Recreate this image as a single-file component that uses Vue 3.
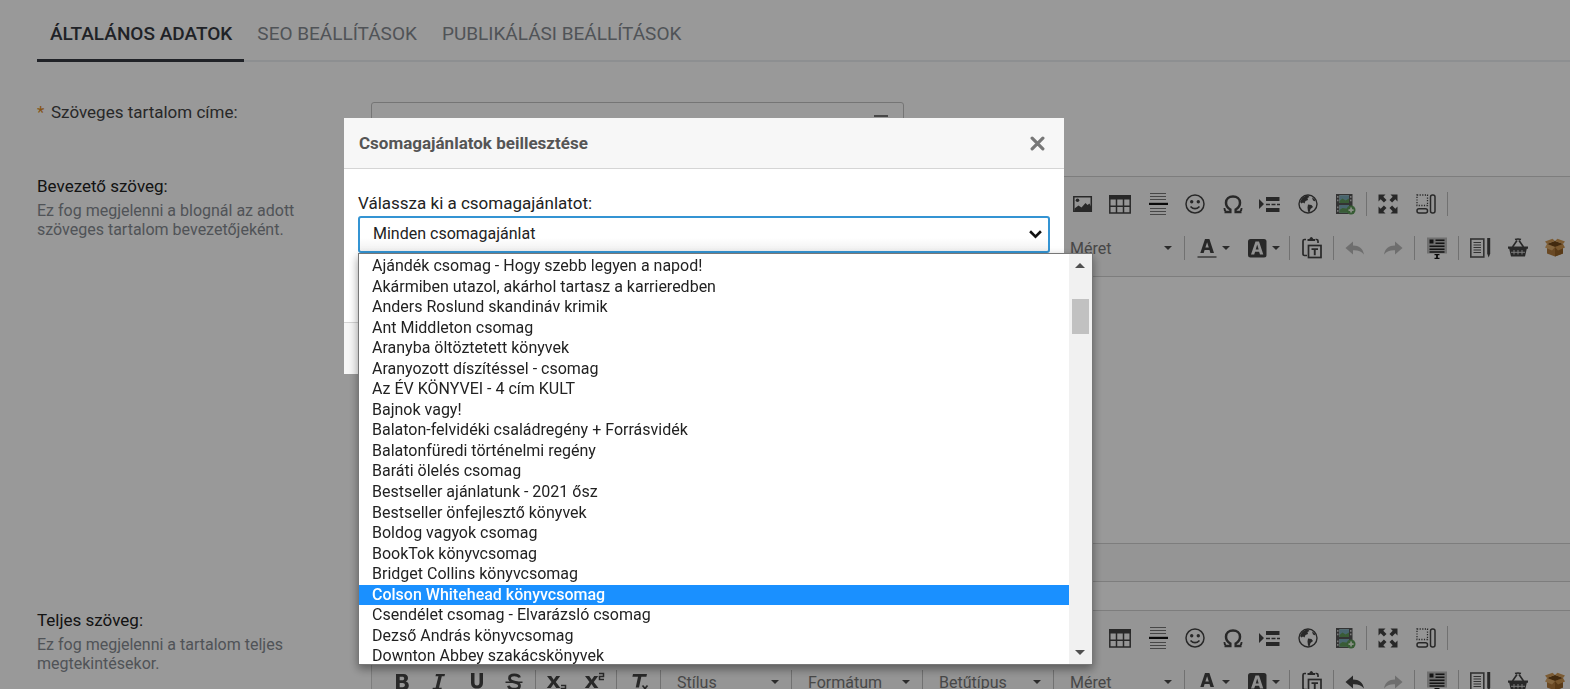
<script setup>
import { ref } from 'vue'

const tabs = ['ÁLTALÁNOS ADATOK', 'SEO BEÁLLÍTÁSOK', 'PUBLIKÁLÁSI BEÁLLÍTÁSOK']
const activeTab = ref(0)

const packages = [
  'Ajándék csomag - Hogy szebb legyen a napod!',
  'Akármiben utazol, akárhol tartasz a karrieredben',
  'Anders Roslund skandináv krimik',
  'Ant Middleton csomag',
  'Aranyba öltöztetett könyvek',
  'Aranyozott díszítéssel - csomag',
  'Az ÉV KÖNYVEI - 4 cím KULT',
  'Bajnok vagy!',
  'Balaton-felvidéki családregény + Forrásvidék',
  'Balatonfüredi történelmi regény',
  'Baráti ölelés csomag',
  'Bestseller ajánlatunk - 2021 ősz',
  'Bestseller önfejlesztő könyvek',
  'Boldog vagyok csomag',
  'BookTok könyvcsomag',
  'Bridget Collins könyvcsomag',
  'Colson Whitehead könyvcsomag',
  'Csendélet csomag - Elvarázsló csomag',
  'Dezső András könyvcsomag',
  'Downton Abbey szakácskönyvek'
]
const highlighted = ref(16)

const editors = [
  { id: 'intro', label: 'Bevezető szöveg:', hint: 'Ez fog megjelenni a blognál az adott szöveges tartalom bevezetőjeként.', canUndo: false },
  { id: 'full', label: 'Teljes szöveg:', hint: 'Ez fog megjelenni a tartalom teljes megtekintésekor.', canUndo: true }
]

const insertTools = ['image', 'table', 'rule', 'smiley', 'omega', 'pagebreak', 'globe', 'film']
const viewTools = ['maximize', 'blocks']
const styleTools = ['bold', 'italic', 'underline', 'strike']
const scriptTools = ['sub', 'sup']
const shopTools = ['article', 'basket', 'box']
const combos = ['Stílus', 'Formátum', 'Betűtípus', 'Méret']

const film = '<path d="M3 2h3.500v20H3zM16 2h3.500v20H16zM3 11h16v2H3zM3 2h16v1.200H3zM3 20.800h16V22H3z" fill="#555"/><path d="M6.500 3.200H16V11H6.500zM6.500 13H16v7.800H6.500z" fill="#79a9b8"/><path d="M6.500 9l3-2.500 3 2 3.500-2V11H6.500zM6.500 18l3-2 6.500 1v3.800H6.500z" fill="#5f9a5a"/><path d="M4 4h1.500v1.800H4zM4 7.500h1.500v1.800H4zM4 14.500h1.500v1.800H4zM4 18h1.500v1.800H4zM17 4h1.500v1.800H17zM17 7.500h1.500v1.800H17z" fill="#ccc"/><circle cx="18" cy="18" r="4.500" fill="#5c9a58"/><path d="M17.200 15.500h1.700v1.700h1.700v1.700h-1.700v1.700h-1.700v-1.700h-1.700v-1.700h1.700z" fill="#e6f2e2"/>'

const icons = {
  image: '<path d="M2.800 4.800h17.500v14.500H2.800z" fill="none" stroke="#444" stroke-width="1.500"/><circle cx="6.500" cy="8.200" r="1.800"/><path d="M3.500 19v-2.500l4-3 3 2 4-4.500 2 2 2-1.500 1.500 3V19z"/>',
  table: '<path d="M1 3h22v4.500H1z"/><path d="M1.800 7v14h20.400V7M2 14.200h20M8.500 7v14M15.500 7v14" fill="none" stroke="#444" stroke-width="1.500"/>',
  rule: '<path d="M4 1.500h16M4 4.500h16M4 7.500h16M4 16.500h16M4 19.500h16M4 22.500h16" stroke="#777" stroke-width="1.100"/><path d="M3 10.800h19v2.200H3z" fill="#111"/>',
  smiley: '<circle cx="12" cy="12" r="9" fill="none" stroke="#444" stroke-width="1.500"/><circle cx="8.700" cy="9.700" r="1.700"/><circle cx="15.300" cy="9.700" r="1.700"/><path d="M7.500 14.500q4.500 4.500 9 0" fill="none" stroke="#444" stroke-width="1.700"/>',
  omega: '<path d="M3.500 20h5.800v-2.500C6.500 16 5 13.500 5 10.800 5 6.800 8 4.500 12 4.500s7 2.300 7 6.300c0 2.700-1.500 5.200-4.300 6.700V20h5.800" fill="none" stroke="#444" stroke-width="2.500"/><path d="M2.500 16h1.700l1 3H3zM21.500 16h-1.700l-1 3H21z"/>',
  pagebreak: '<path d="M1 7l5 5-5 5zM8 5h13.500v4H8zM8 16h13.500v4H8z"/><path d="M8 12.500h14" stroke="#444" stroke-width="1.600" stroke-dasharray="4 1.500"/>',
  globe: '<circle cx="12" cy="12" r="9" fill="none" stroke="#444" stroke-width="1.400"/><path d="M5 8c1.500-3 4-4.500 7-4.500l1.500 1.500-2 1 .5 2-2.500 1-1 2.500-1.500-1-1.500 1L4 10zM12 12.500l3.500.5 1.500 2-2.500 2-1 3.500-1.500-1-.5-4zM16 5.500l2.500 1.500 1 2.500-2.500-1z"/>',
  film,
  maximize: '<path d="M2.500 2.500h7L7.300 4.700l3.200 3.200-2.600 2.600-3.200-3.200-2.200 2.200zM21.500 2.500v7l-2.200-2.200-3.200 3.200-2.600-2.600 3.200-3.200-2.200-2.200zM2.500 21.500v-7l2.200 2.200 3.200-3.200 2.600 2.600-3.200 3.200 2.200 2.200zM21.500 21.500h-7l2.200-2.200-3.200-3.200 2.600-2.600 3.200 3.200 2.200-2.200z"/>',
  blocks: '<path d="M3 3h10.500v10.500H3z" fill="none" stroke="#444" stroke-width="1.300" stroke-dasharray="1.200 1.400"/><rect x="16.500" y="3" width="4.500" height="18" rx="2" fill="none" stroke="#444" stroke-width="1.500"/><rect x="3" y="16.800" width="10.500" height="4.200" rx="2" fill="none" stroke="#444" stroke-width="1.500"/>',
  bold: '<path fill-rule="evenodd" d="M6 4h7.500c3 0 4.500 1.700 4.500 4 0 1.800-1 3-2.300 3.500 1.900.4 3.100 1.900 3.100 4 0 2.900-2 4.500-5.300 4.500H6zM9.700 6.800v3.500h2.500c1.300 0 2-.6 2-1.800 0-1.100-.7-1.700-2-1.700zM9.700 13v4.200h2.900c1.500 0 2.300-.7 2.300-2.100S14.100 13 12.600 13z"/>',
  italic: '<path d="M9 4h9l-.5 2.300h-2.700L12 17.700h2.800l-.5 2.300h-9l.5-2.300h2.800L11.400 6.300H8.500z"/>',
  underline: '<path d="M6 3h3.500v9.500c0 2 .8 3 2.500 3s2.500-1 2.500-3V3H18v9.500c0 4-2.200 6-6 6s-6-2-6-6zM5 20.500h14v2H5z"/>',
  strike: '<path d="M17.500 7.500C17 5.500 15 4.800 12.300 4.800c-3 0-4.800 1.200-4.800 3.400 0 5.800 10 2 10 7.500 0 2.300-2 3.500-5.200 3.500-3.300 0-5.300-1-5.800-3.400" fill="none" stroke="#444" stroke-width="2.800"/><path d="M3.500 11.500h17v1.500h-17z"/>',
  sub: '<path d="M2 6h4.200l2.500 3.800L11.200 6h4l-4.400 6 4.600 6h-4.200l-2.700-3.900L5.800 18h-4l4.700-6z"/><path d="M16 15.500h4.500v3H16.500V21.500H21" fill="none" stroke="#444" stroke-width="1.500"/>',
  sup: '<path d="M2 6h4.200l2.500 3.800L11.200 6h4l-4.400 6 4.600 6h-4.200l-2.700-3.900L5.800 18h-4l4.700-6z"/><path d="M16 3.500h4.500v3H16.500V9.500H21" fill="none" stroke="#444" stroke-width="1.500"/>',
  clear: '<path d="M6 4h14l-.6 2.700h-5.100L12 17.500H8.700L11 6.700H5.400zM3 19.500h10v2H3z"/><path d="M15.500 15.500l5 6m0-6l-5 6" stroke="#444" stroke-width="1.700"/>',
  color: '<path fill-rule="evenodd" d="M10 3h4.400l4.600 14h-3.600l-.9-3H9.600l-.9 3H5.300zM12.100 6.300L10.400 11.500h3.400z"/><path d="M2.500 20h19v2h-19z" fill="#888"/>',
  background: '<rect x="3" y="3" width="18.500" height="18.500" rx="2.500"/><path fill="#f4f4f4" fill-rule="evenodd" d="M10.500 5.500h3.500l4.300 13H15l-.9-2.700h-4l-.9 2.700H6zM12.200 8.500l-1.500 5h3z"/>',
  paste: '<path d="M6 3.500H4.500Q3 3.500 3 5v13q0 1.500 1.500 1.500H7M15.500 3.500h1q1.500 0 1.500 1.500v2" fill="none" stroke="#444" stroke-width="1.700"/><path d="M7.500 5V3h1.800q1-2 2-2t2 2H15v2z"/><rect x="8.500" y="9.500" width="12.500" height="12" fill="none" stroke="#444" stroke-width="1.700"/><path d="M11.500 12.200H18v1.800h-2.300v5.200h-1.900V14h-2.300z"/>',
  undo: '<path d="M10 5.500v4c6 0 10 3 11 9-3-3.500-6-4.500-11-4.300v4.300L2.500 12z"/>',
  redo: '<path d="M14 5.500v4c-6 0-10 3-11 9 3-3.500 6-4.500 11-4.300v4.300l7.500-6.500z"/>',
  template: '<path d="M2 1.500h20v16H2z" fill="#bbb"/><path d="M4.500 3.500h4v4h-4zM10.500 3.500h9V5h-9zM10.500 6.500h9V8h-9zM4.500 9.500h15V11h-15zM4.500 12.500h15V14h-15zM4.500 15.300h15v1.500h-15z" fill="#222"/><path d="M9.500 18h5v1.300h-1.600v2.500h1.600v1.300h-5v-1.300h1.600v-2.500H9.500z" fill="#111"/>',
  article: '<rect x="2.800" y="3" width="13" height="18" fill="none" stroke="#555" stroke-width="1.600"/><path d="M5.500 6.500h7.500M5.500 9h7.500M5.500 11.500h7.500M5.500 14h7.500M5.500 16.500h7.500" stroke="#555" stroke-width="1"/><path d="M19.200 2h3v15.500l-1.500 4-1.500-4z"/>',
  basket: '<path d="M2 10.500h20v2.200h-1.200L19 20.500H5L3.200 12.700H2z"/><path d="M6.500 11L11 4.500M17.500 11L13 4.500M9 3.500q3-1 6 0" fill="none" stroke="#444" stroke-width="1.600"/><path d="M8 14v4.500M12 14v4.500M16 14v4.500M5 16.300h14" stroke="#ccc" stroke-width="1"/>',
  box: '<path d="M4 8l8-3 8 3v9.500l-8 3-8-3z" fill="#b17a3c"/><path d="M12 11v9.500l8-3V8z" fill="#946127"/><path d="M4 8l8-3 8 3-8 3z" fill="#6f4719"/><path d="M4 8l8 3-3 3.500-7-3z" fill="#dba868"/><path d="M20 8l-8 3 3 3.500 7-3z" fill="#c9924e"/><path d="M4 8l8-3-2.500-2.200L2 5.500zM20 8l-8-3 2.500-2.200L22 5.500z" fill="#cf9a58"/>'
}
</script>

<template>
  <main class="page">
    <nav class="tabs">
      <button v-for="(t, i) in tabs" :key="t" type="button" class="tab" :class="{ active: i === activeTab }" @click="activeTab = i">{{ t }}</button>
    </nav>

    <form class="form" @submit.prevent>
      <div class="row title-row">
        <label class="name required" for="content-title"><span class="star">*</span>Szöveges tartalom címe:</label>
        <div class="title-field">
          <input id="content-title" type="text">
          <svg class="field-icon" viewBox="0 0 18 12" aria-hidden="true"><path d="M2 1h14M2 6h14M2 11h14" stroke="#777" stroke-width="2" /></svg>
        </div>
      </div>

      <div v-for="e in editors" :key="e.id" class="row">
        <div class="caption">
          <label class="name" :for="e.id">{{ e.label }}</label>
          <p class="hint">{{ e.hint }}</p>
        </div>
        <div class="editor">
          <div class="toolbar">
            <div class="bar insert-bar">
              <div class="group n8">
                <button v-for="n in insertTools" :key="n" type="button" :aria-label="n"><svg viewBox="0 0 24 24" v-html="icons[n]" /></button>
              </div>
              <i class="sep" />
              <div class="group n2">
                <button v-for="n in viewTools" :key="n" type="button" :aria-label="n"><svg viewBox="0 0 24 24" v-html="icons[n]" /></button>
              </div>
              <i class="sep" />
            </div>
            <div class="bar">
              <div class="group n4">
                <button v-for="n in styleTools" :key="n" type="button" :aria-label="n"><svg viewBox="0 0 24 24" v-html="icons[n]" /></button>
              </div>
              <i class="sep" />
              <div class="group n2">
                <button v-for="n in scriptTools" :key="n" type="button" :aria-label="n"><svg viewBox="0 0 24 24" v-html="icons[n]" /></button>
              </div>
              <i class="sep" />
              <div class="group n1">
                <button type="button" aria-label="clear"><svg viewBox="0 0 24 24" v-html="icons.clear" /></button>
              </div>
              <i class="sep" />
              <template v-for="c in combos" :key="c">
                <button type="button" class="combo">{{ c }}<span class="caret" /></button>
                <i class="sep" />
              </template>
              <button type="button" class="color" aria-label="color"><svg viewBox="0 0 24 24" v-html="icons.color" /><span class="caret" /></button>
              <button type="button" class="color" aria-label="background"><svg viewBox="0 0 24 24" v-html="icons.background" /><span class="caret" /></button>
              <i class="sep" />
              <div class="group n1">
                <button type="button" aria-label="paste"><svg viewBox="0 0 24 24" v-html="icons.paste" /></button>
              </div>
              <i class="sep" />
              <div class="group n2">
                <button type="button" aria-label="undo" :disabled="!e.canUndo"><svg viewBox="0 0 24 24" v-html="icons.undo" /></button>
                <button type="button" aria-label="redo" disabled><svg viewBox="0 0 24 24" v-html="icons.redo" /></button>
              </div>
              <i class="sep" />
              <div class="group n1">
                <button type="button" aria-label="template"><svg viewBox="0 0 24 24" v-html="icons.template" /></button>
              </div>
              <i class="sep" />
              <div class="group n3">
                <button v-for="n in shopTools" :key="n" type="button" :aria-label="n"><svg viewBox="0 0 24 24" v-html="icons[n]" /></button>
              </div>
            </div>
          </div>
          <textarea :id="e.id" class="content" />
          <div class="status" />
        </div>
      </div>
    </form>
  </main>

  <div class="overlay">
    <section class="dialog" role="dialog" aria-labelledby="dialog-title">
      <header class="dialog-head">
        <h2 id="dialog-title">Csomagajánlatok beillesztése</h2>
        <button type="button" class="close" aria-label="close">
          <svg viewBox="0 0 14 14"><path d="M2 2l10 10M12 2L2 12" stroke="#777" stroke-width="3" stroke-linecap="round" /></svg>
        </button>
      </header>
      <div class="dialog-body">
        <label for="package">Válassza ki a csomagajánlatot:</label>
        <div class="picker">
          <select id="package"><option>Minden csomagajánlat</option></select>
          <svg class="chevron" viewBox="0 0 12 8" aria-hidden="true"><path d="M1 1l5 5 5-5" fill="none" stroke="#111" stroke-width="2.400" /></svg>
          <div class="dropdown">
            <ul role="listbox">
              <li v-for="(p, i) in packages" :key="p" role="option" :aria-selected="i === highlighted" :class="{ on: i === highlighted }" @mouseenter="highlighted = i">{{ p }}</li>
            </ul>
            <div class="scrollbar"><span class="up" /><span class="thumb" /><span class="down" /></div>
          </div>
        </div>
      </div>
      <footer class="dialog-foot" />
    </section>
  </div>
</template>

<style>
html, body { height: 100%; overflow: hidden; }
</style>

<style scoped>
.page, .overlay { font-family: Roboto, "Liberation Sans", sans-serif; font-size: 16px; color: #222; box-sizing: border-box; }
.page *, .overlay * { box-sizing: border-box; }
button, select, input, textarea { font: inherit; color: inherit; }
button { border: 0; background: none; padding: 0; }
.page { height: 100vh; overflow: hidden; background: #fff; padding: 8px 0 0 37px; }

.tabs { display: flex; height: 54px; border-bottom: 2px solid #eceef2; }
.tab { flex: none; height: 54px; padding: 0 12px 0 13px; font-size: 19px; color: #868b92; border-bottom: 3px solid transparent; }
.tab.active { font-weight: 500; color: #363a42; border-color: #363a42; }

.form { padding-top: 40px; display: flex; flex-direction: column; gap: 28px; }
.row { display: grid; grid-template-columns: 334px 1fr; flex: none; }
.title-row { margin-bottom: 10px; }
.name { display: block; line-height: 20px; font-size: 17px; }
.required { color: #444; }
.star { color: #e08a1e; display: inline-block; width: 14px; }
.hint { margin: 5px 0 0; line-height: 19px; width: 275px; color: #868b92; }
.title-field { position: relative; width: 533px; height: 36px; }
.title-field input { width: 100%; height: 36px; border: 1px solid #c4c4c4; border-radius: 3px; background: none; }
.field-icon { position: absolute; right: 14px; top: 13px; width: 18px; height: 12px; }

.editor { border: 1px solid #d1d1d1; border-right: 0; min-width: 0; overflow: hidden; }
.toolbar { background: #f8f8f8; border-bottom: 1px solid #d1d1d1; padding: 5px 0 6px 11px; }
.bar { display: flex; height: 44px; align-items: center; }
.insert-bar { padding-left: 681px; }
.group { display: flex; flex: none; }
.group button { flex: 1; }
.group.n1 { width: 39px; }
.group.n2 { width: 76px; }
.group.n3 { width: 113px; }
.group.n4 { width: 150px; }
.group.n8 { width: 300px; }
.bar button { display: flex; align-items: center; justify-content: center; height: 30px; }
.bar svg { width: 24px; height: 24px; fill: #444; flex: none; }
.bar button:disabled svg { opacity: .35; }
.sep { flex: none; width: 1px; height: 24px; margin: 0 2px; background: #bcbcbc; }
.bar .combo { flex: none; width: 126px; padding: 0 10px 0 14px; justify-content: space-between; color: #777; }
.bar .color { flex: none; width: 50px; gap: 3px; }
.caret { border: 4px solid transparent; border-top-color: #484848; border-bottom: 0; }
.content { display: block; width: 100%; height: 266px; border: 0; background: #fff; resize: none; }
.status { height: 38px; background: #f8f8f8; border-top: 1px solid #d1d1d1; }

.overlay { position: fixed; inset: 0; background: rgba(0, 0, 0, .4); padding: 118px 0 0 344px; }
.dialog { width: 720px; background: #fff; }
.dialog-head { display: flex; align-items: center; justify-content: space-between; height: 51px; padding: 0 19px 0 15px; background: #f7f7f7; border-bottom: 1px solid #d5d5d5; }
.dialog-head h2 { margin: 0; font-size: 17px; font-weight: 700; color: #555; }
.close { width: 15px; height: 15px; }
.close svg { display: block; width: 15px; height: 15px; }
.dialog-body { height: 153px; padding: 24px 14px 0; }
.dialog-body label { display: block; font-size: 17px; line-height: 20px; margin-bottom: 3px; color: #222; }
.picker { position: relative; }
.picker select { display: block; width: 100%; height: 37px; appearance: none; border: 2px solid #3494d3; border-radius: 3px; padding: 0 13px 2px; background: linear-gradient(#fff 60%, #f1f1f1); color: #222; outline: none; }
.chevron { position: absolute; right: 8px; top: 14px; width: 13px; height: 9px; }
.dialog-foot { height: 52px; border-top: 1px solid #d5d5d5; background: #f7f7f7; }

.dropdown { position: absolute; left: 0; top: 37px; width: 735px; height: 412px; border: 1px solid #777; background: #fff; display: flex; overflow: hidden; box-shadow: 0 4px 9px rgba(0, 0, 0, .4); }
.dropdown ul { flex: 1; display: flex; flex-direction: column; height: 413px; margin: 0; padding: 2px 0 0; list-style: none; }
.dropdown li { flex: 1; padding-left: 13px; line-height: 20px; white-space: nowrap; color: #222; }
.dropdown li.on { background: #1a90ff; color: #fff; font-weight: 500; }
.scrollbar { position: relative; width: 23px; background: #f1f1f1; }
.scrollbar span { position: absolute; }
.thumb { left: 3px; right: 3px; top: 45px; height: 35px; background: #c1c1c1; }
.up, .down { left: 6px; border: 5px solid transparent; }
.up { top: 9px; border-bottom-color: #505050; border-top: 0; }
.down { bottom: 9px; border-top-color: #505050; border-bottom: 0; }
</style>
